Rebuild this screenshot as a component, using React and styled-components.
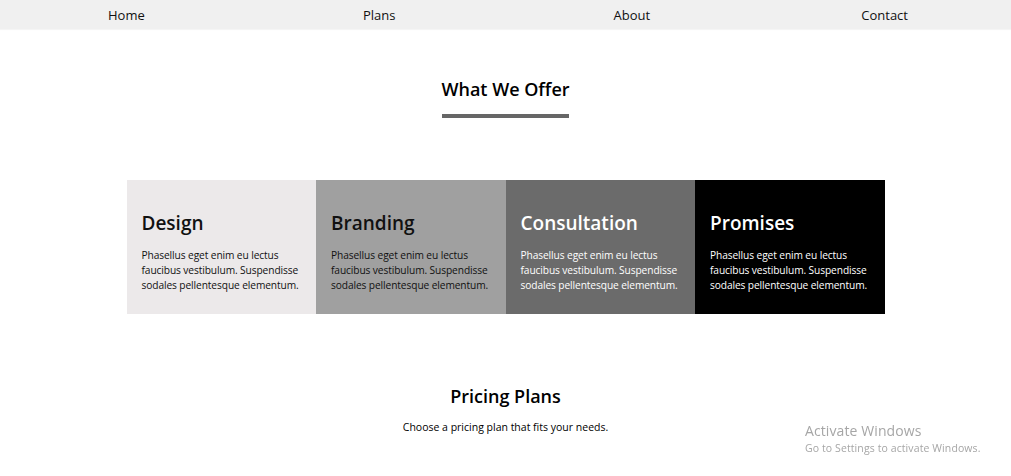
import React from "react";
import styled, { createGlobalStyle } from "styled-components";

const GlobalStyle = createGlobalStyle`
  body {
    margin: 0;
    background: #ffffff;
    font-family: "Open Sans", "Noto Sans", sans-serif;
    color: #000;
  }
`;

const NavBar = styled.nav`
  display: grid;
  grid-template-columns: repeat(4, 1fr);
  height: 29px;
  background: #f0f0f0;
  box-shadow: 0 1px 1px rgba(0, 0, 0, 0.04);
`;

const NavLink = styled.a`
  display: flex;
  align-items: center;
  justify-content: center;
  font-size: 13px;
  color: #111;
  text-decoration: none;
`;

const Section = styled.section`
  display: flex;
  flex-direction: column;
  align-items: center;
  padding-top: ${props => props.top}px;
`;

const SectionTitle = styled.h2`
  margin: 0;
  font-size: 18px;
  font-weight: 600;
  line-height: 24px;
`;

const Underline = styled.div`
  width: 127px;
  height: 4px;
  background: #666666;
  margin-top: 13px;
`;

const Cards = styled.div`
  display: grid;
  grid-template-columns: repeat(4, 189.5px);
  margin-top: 62px;
`;

const Card = styled.div`
  height: 134px;
  box-sizing: border-box;
  padding: 30px 2px 0 15px;
  background: ${props => props.bg};
  color: ${props => (props.light ? "#ffffff" : "#111111")};
`;

const CardTitle = styled.h3`
  margin: 0;
  font-size: 19px;
  font-weight: 600;
  line-height: 26px;
`;

const CardText = styled.p`
  margin: 12px 0 0;
  font-size: 10.2px;
  line-height: 15px;
  letter-spacing: -0.1px;
`;

const Subtitle = styled.p`
  margin: 11px 0 0;
  font-size: 10.5px;
  line-height: 16px;
`;

const Watermark = styled.div`
  position: fixed;
  left: 805px;
  top: 421px;
  color: #a6a6a6;
  font-size: 10.5px;
  line-height: 15px;
  letter-spacing: 0.1px;
`;

const WatermarkTitle = styled.div`
  font-size: 14px;
  line-height: 20px;
`;

const services = [
  { title: "Design", bg: "#ece9ea" },
  { title: "Branding", bg: "#a0a0a0" },
  { title: "Consultation", bg: "#6b6b6b", light: true },
  { title: "Promises", bg: "#000000", light: true },
];

export default function App() {
  return (
    <>
      <GlobalStyle />
      <NavBar>
        <NavLink href="#">Home</NavLink>
        <NavLink href="#">Plans</NavLink>
        <NavLink href="#">About</NavLink>
        <NavLink href="#">Contact</NavLink>
      </NavBar>
      <Section top={48}>
        <SectionTitle>What We Offer</SectionTitle>
        <Underline />
        <Cards>
          {services.map(s => (
            <Card key={s.title} bg={s.bg} light={s.light}>
              <CardTitle>{s.title}</CardTitle>
              <CardText>
                Phasellus eget enim eu lectus faucibus vestibulum. Suspendisse
                sodales pellentesque elementum.
              </CardText>
            </Card>
          ))}
        </Cards>
      </Section>
      <Section top={70}>
        <SectionTitle>Pricing Plans</SectionTitle>
        <Subtitle>Choose a pricing plan that fits your needs.</Subtitle>
      </Section>
      <Watermark>
        <WatermarkTitle>Activate Windows</WatermarkTitle>
        Go to Settings to activate Windows.
      </Watermark>
    </>
  );
}
